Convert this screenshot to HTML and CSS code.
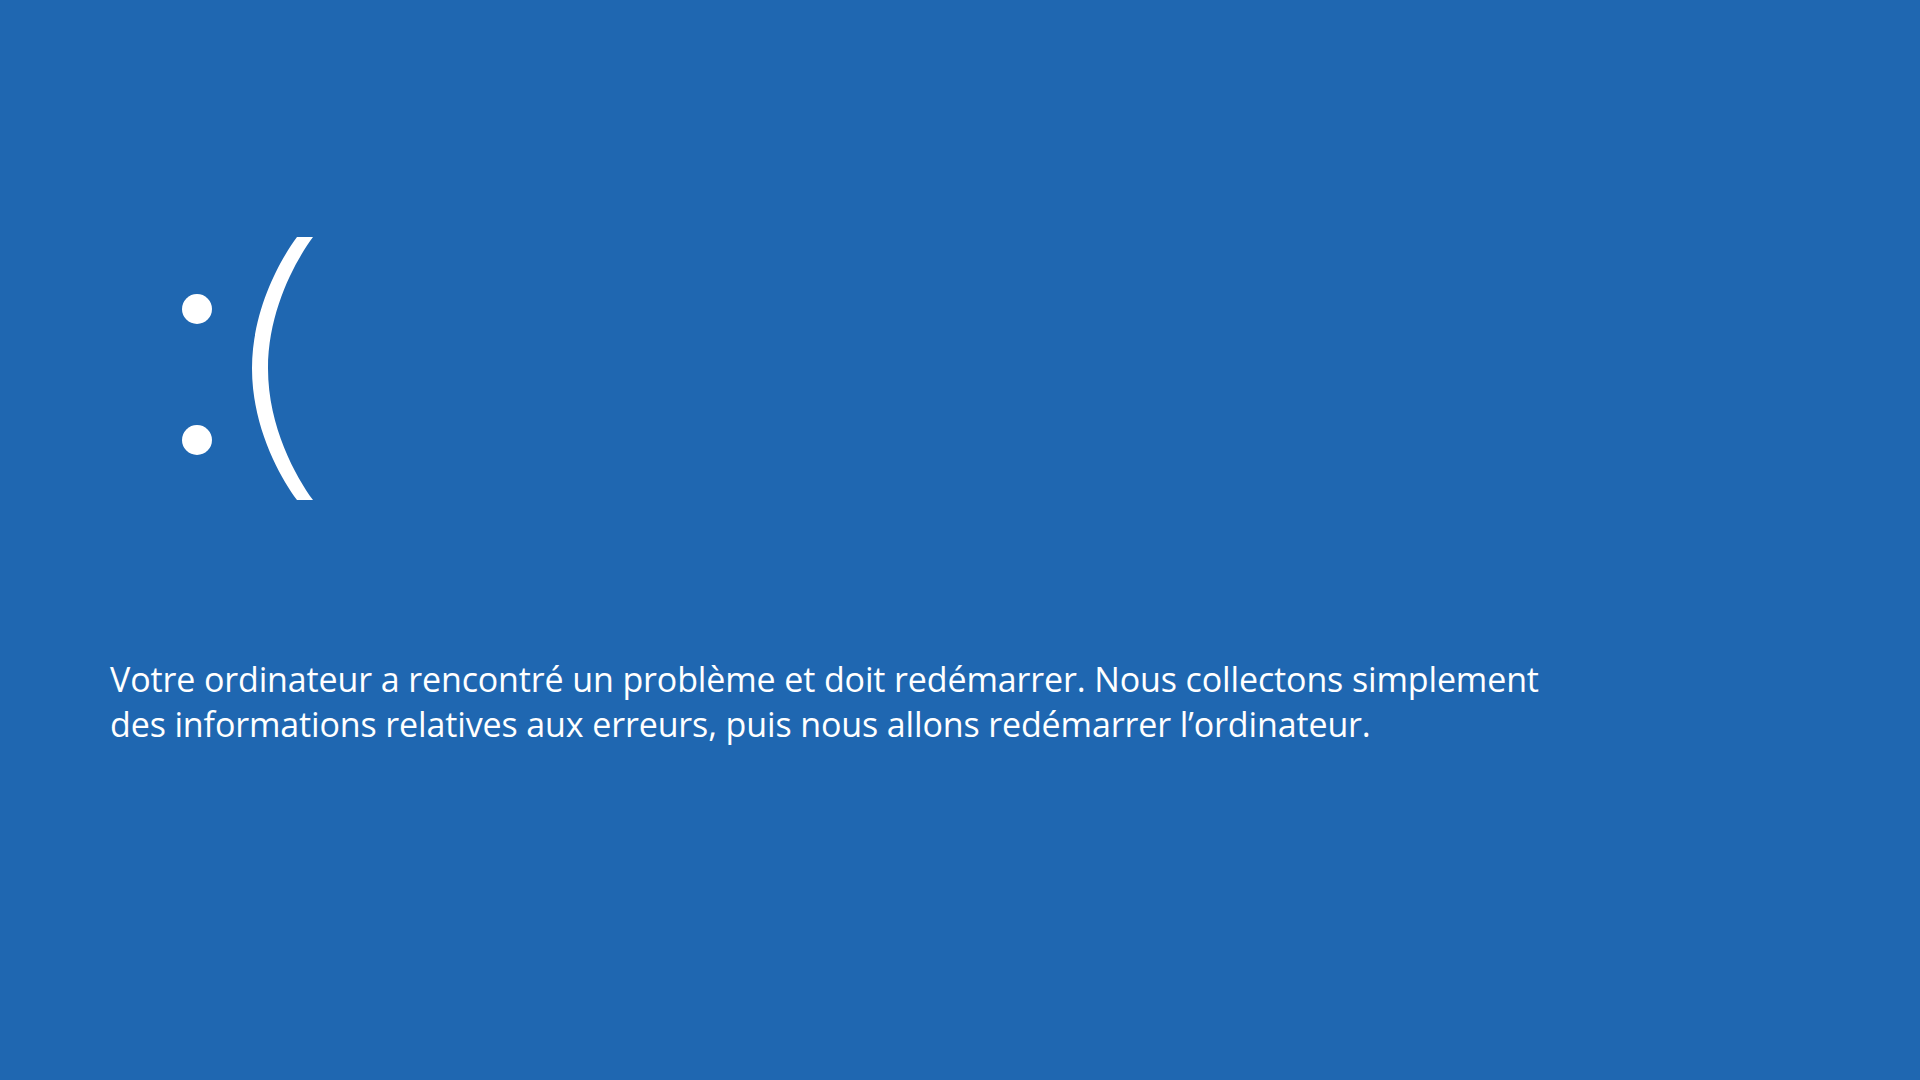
FILE: index.html
```html
<!DOCTYPE html>
<html lang="fr">
<head>
<meta charset="utf-8">
<title>Erreur</title>
<link rel="stylesheet" href="styles.css">
</head>
<body>
<main class="screen">
  <div class="face" aria-label=":(">
    <svg class="face-svg" width="140" height="280" viewBox="0 0 140 280">
      <circle cx="17" cy="79" r="15" fill="#fff"/>
      <circle cx="17" cy="210" r="15" fill="#fff"/>
      <path fill="#fff" d="M117 7 L133 7 C116 30 88 80 88 138.5 C88 197 116 247 133 270 L117 270 C100 247 72 197 72 138.5 C72 80 100 30 117 7 Z"/>
    </svg>
  </div>
  <p class="message">Votre ordinateur a rencontré un problème et doit redémarrer. Nous collectons simplement<br>des informations relatives aux erreurs, puis nous allons redémarrer l’ordinateur.</p>
</main>
</body>
</html>
```
FILE: styles.css
```css
html, body {
  margin: 0;
  padding: 0;
  height: 100%;
}
body {
  background: #1f67b1;
  color: #ffffff;
  font-family: "Open Sans", "Noto Sans", "Liberation Sans", sans-serif;
}
.screen {
  display: flex;
  flex-direction: column;
  padding: 230px 0 0 110px;
  box-sizing: border-box;
  height: 100%;
}
.face {
  padding-left: 70px;
  height: 280px;
}
.face-svg {
  display: block;
}
.message {
  margin: 147px 0 0 0;
  font-size: 34px;
  line-height: 44.5px;
  letter-spacing: -0.13px;
  white-space: nowrap;
}
```
